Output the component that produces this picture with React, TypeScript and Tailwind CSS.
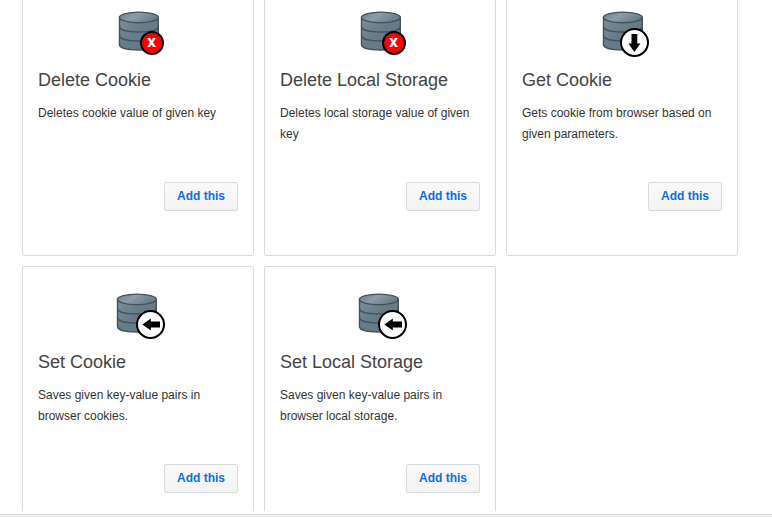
type IconKind = "delete" | "get" | "set";

interface Action {
  title: string;
  description: string;
  icon: IconKind;
}

const actions: Action[] = [
  { title: "Delete Cookie", description: "Deletes cookie value of given key", icon: "delete" },
  { title: "Delete Local Storage", description: "Deletes local storage value of given key", icon: "delete" },
  { title: "Get Cookie", description: "Gets cookie from browser based on given parameters.", icon: "get" },
  { title: "Set Cookie", description: "Saves given key-value pairs in browser cookies.", icon: "set" },
  { title: "Set Local Storage", description: "Saves given key-value pairs in browser local storage.", icon: "set" },
];

function StorageIcon({ kind }: { kind: IconKind }) {
  return (
    <svg width="56" height="48" viewBox="0 0 56 48" aria-hidden="true" className="mx-auto block">
      <defs>
        <linearGradient id={`body-${kind}`} x1="0" y1="0" x2="1" y2="1">
          <stop offset="0" stopColor="#7c909b" />
          <stop offset="0.45" stopColor="#667c89" />
          <stop offset="1" stopColor="#627986" />
        </linearGradient>
        <linearGradient id={`top-${kind}`} x1="0" y1="0.2" x2="1" y2="0.6">
          <stop offset="0" stopColor="#71858f" />
          <stop offset="0.4" stopColor="#8b9da6" />
          <stop offset="1" stopColor="#637985" />
        </linearGradient>
      </defs>
      <g transform={kind === "set" ? "translate(-2 0)" : undefined} stroke="#465259" strokeWidth="1.4">
        <path d="M9.5 8.5V35.5C9.5 39 18 41 29 41S48.3 39 48.3 35.5V8.5Z" fill={`url(#body-${kind})`} />
        <path
          d="M9.5 17.5C9.5 21 18 23 29 23S48.3 21 48.3 17.5M9.5 26.5C9.5 30 18 32 29 32S48.3 30 48.3 26.5"
          fill="none"
        />
        <ellipse cx="28.9" cy="8.4" rx="19.4" ry="5.3" fill={`url(#top-${kind})`} />
      </g>
      {kind === "delete" ? (
        <>
          <circle cx="42" cy="34" r="11" fill="#fe0000" stroke="#000" strokeWidth="2" />
          <text
            x="41.6"
            y="38"
            textAnchor="middle"
            fill="#fff"
            className="font-['Open_Sans',sans-serif] text-[12px] font-extrabold"
          >
            X
          </text>
        </>
      ) : (
        <>
          <circle cx="40.5" cy="33.5" r="13.5" fill="#fff" stroke="#000" strokeWidth="2" />
          {kind === "get" ? (
            <path d="M37.5 25H43.3V34.5H46.4L40.4 43L34.4 34.5H37.5Z" fill="#000" />
          ) : (
            <path d="M50 30.6V36.4H40.8V39.5L32.4 33.5L40.8 27.500V30.600Z" fill="#000" />
          )}
        </>
      )}
    </svg>
  );
}

function ActionCard({ title, description, icon }: Action) {
  return (
    <article className="flex flex-col rounded-xs border border-[#dbdbdb] bg-white px-[15px] pt-6 pb-11">
      <StorageIcon kind={icon} />
      <h2 className="mt-[11px] text-[18px] leading-6 text-[#444]">{title}</h2>
      <p className="mt-[11px] min-h-[79px] text-[12px] leading-[21px] text-[#333]">{description}</p>
      <button
        type="button"
        aria-label={`Add this: ${title}`}
        className="self-end rounded-xs border border-[#dadada] bg-linear-to-b from-[#fafafa] to-[#f3f3f3] px-3 text-[12px] leading-[27px] font-bold text-[#0b6ee8]"
      >
        Add this
      </button>
    </article>
  );
}

export default function App() {
  return (
    <div className="flex h-screen flex-col bg-white font-['Liberation_Sans',Arial,sans-serif]">
      <main className="min-h-0 flex-1 overflow-hidden pr-[34px] pl-[22px]">
        <div className="-mt-4 grid grid-cols-3 gap-[10px]">
          {actions.map((action) => (
            <ActionCard key={action.title} {...action} />
          ))}
        </div>
      </main>
      <footer className="mt-[3px] h-[3px] shrink-0 border-t border-[#d6d6d6] bg-[#efefef]" />
    </div>
  );
}
